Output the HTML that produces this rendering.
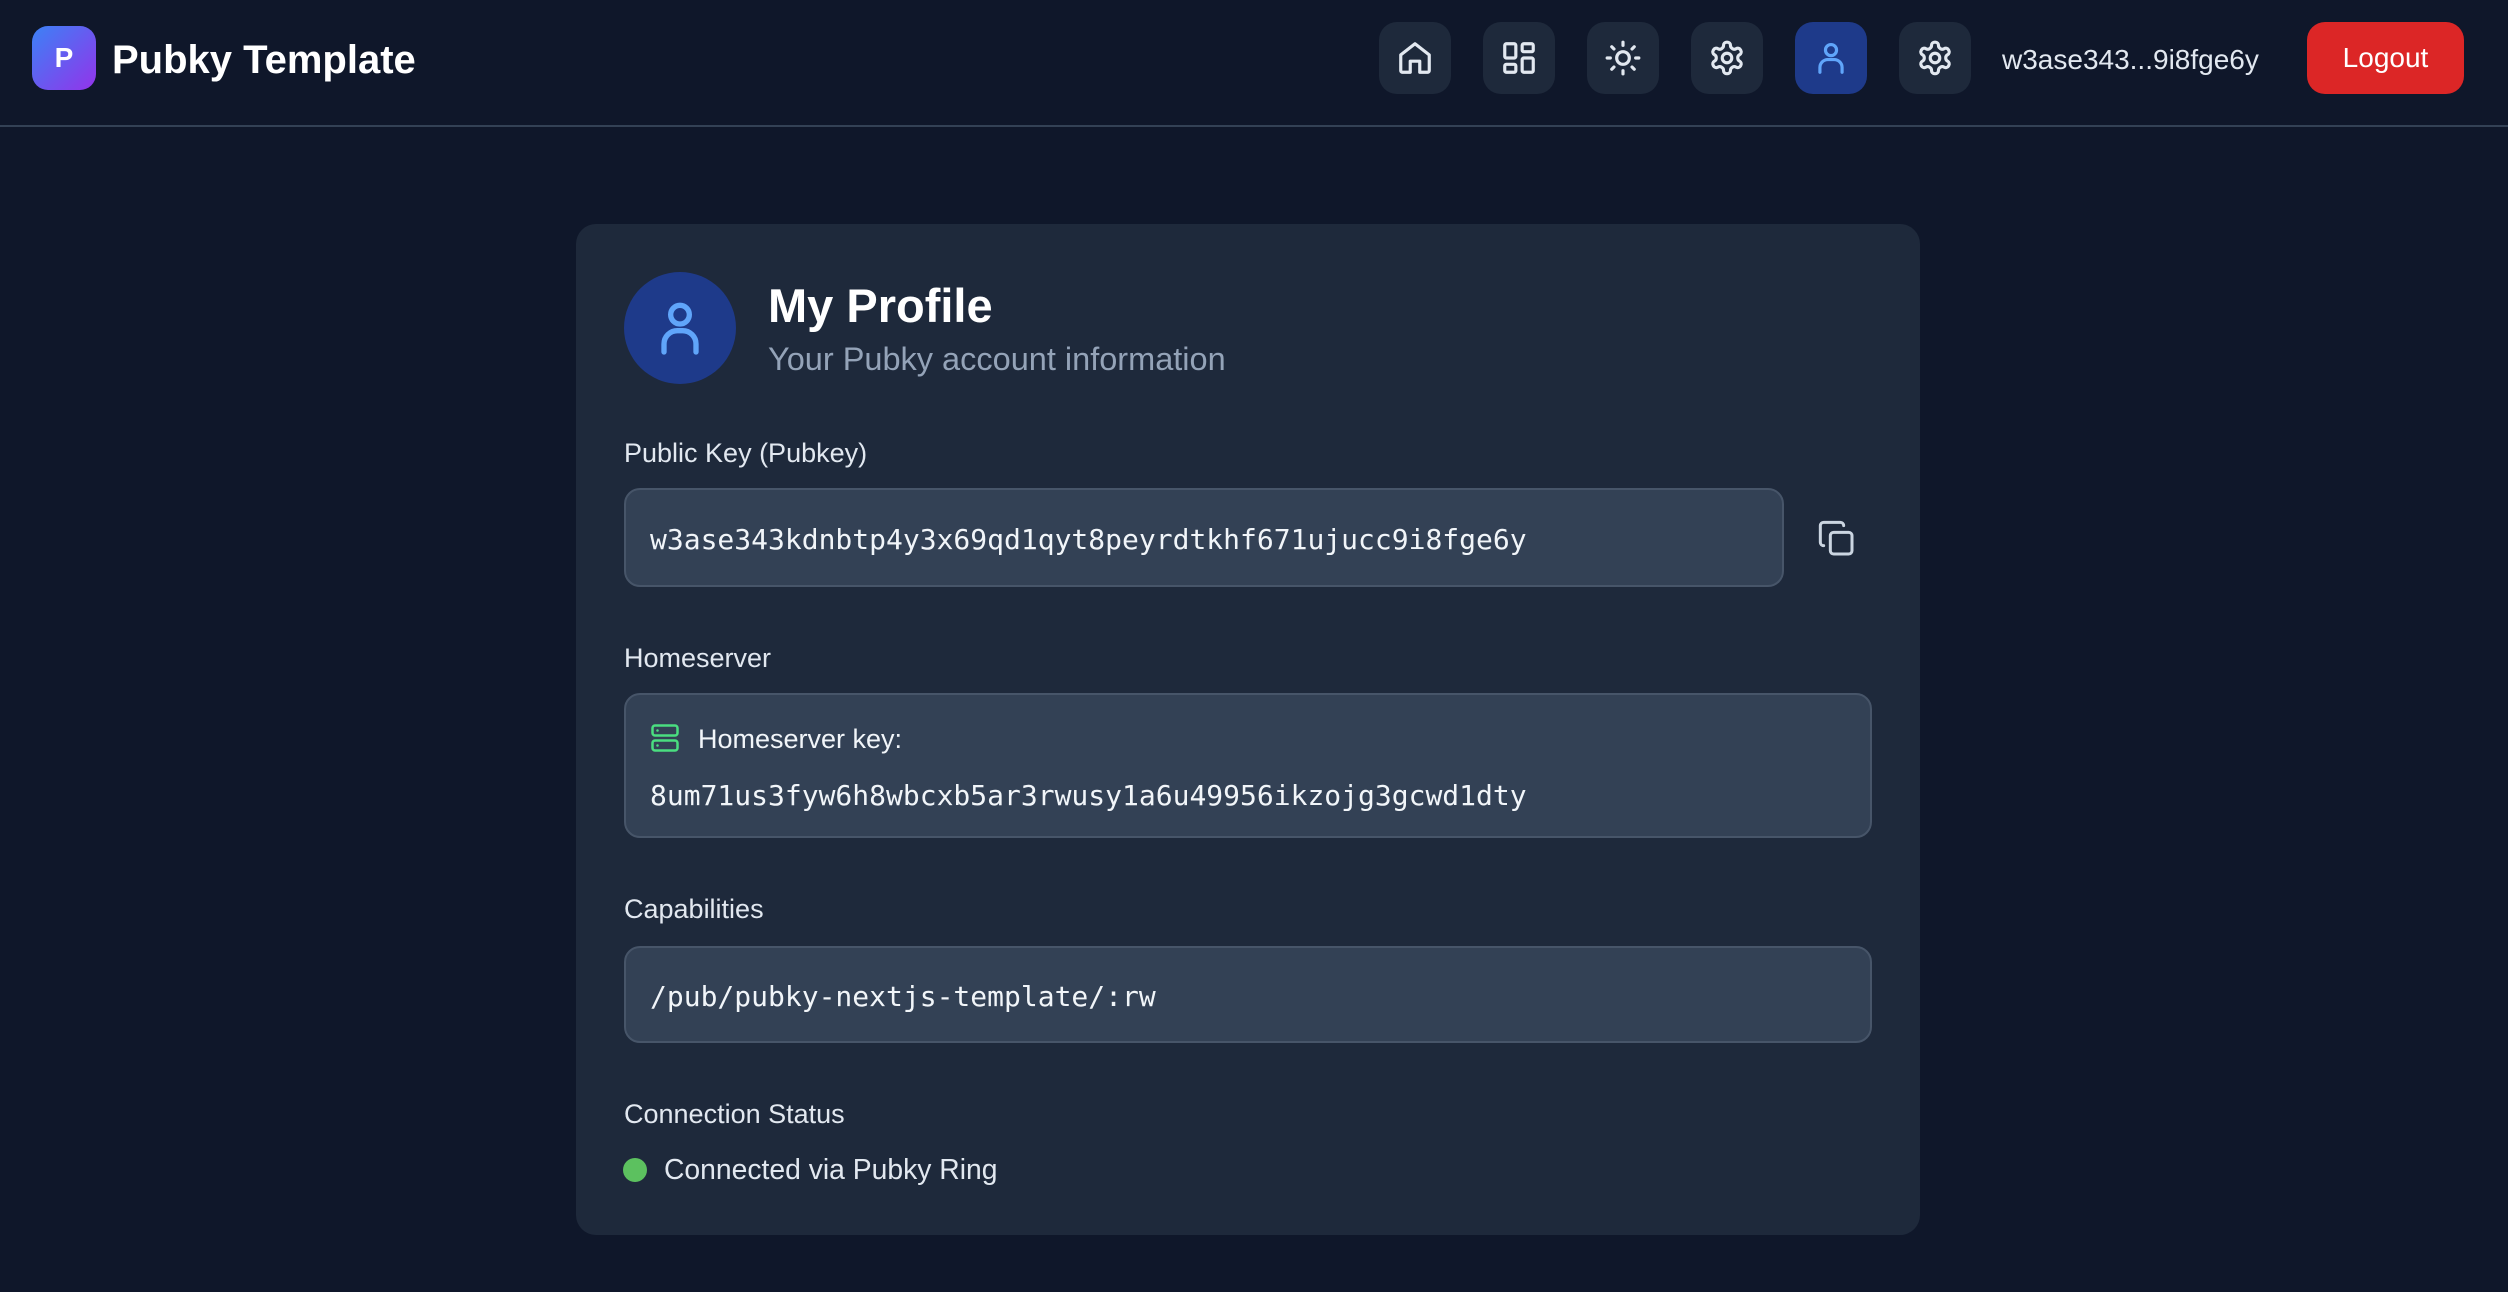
<!DOCTYPE html>
<html><head><meta charset="utf-8"><style>
*{box-sizing:border-box;margin:0;padding:0}
body{width:2508px;height:1292px;background:#0f172a;font-family:"Liberation Sans",sans-serif;color:#f8fafc;position:relative;overflow:hidden}
.hdr{position:absolute;left:0;top:0;width:2508px;height:127px;border-bottom:2px solid #334155}
.logo{position:absolute;left:32px;top:26px;width:64px;height:64px;border-radius:16px;background:linear-gradient(135deg,#3b82f6,#9333ea);color:#fff;font-weight:bold;font-size:28px;display:flex;align-items:center;justify-content:center}
.brand{position:absolute;left:112px;top:38px;font-size:40px;font-weight:bold;color:#fff}
.nb{position:absolute;top:22px;width:72px;height:72px;border-radius:18px;background:#1e293b;display:flex;align-items:center;justify-content:center}
.nb svg{width:38px;height:38px;fill:none;stroke:#e2e8f0;stroke-width:2;stroke-linecap:round;stroke-linejoin:round}
.user{position:absolute;left:2002px;top:44px;font-size:28px;color:#e2e8f0}
.logout{position:absolute;left:2307px;top:22px;width:157px;height:72px;border-radius:18px;background:#dc2626;color:#fff;font-size:28px;display:flex;align-items:center;justify-content:center}
.card{position:absolute;left:576px;top:224px;width:1344px;height:1011px;background:#1e293b;border-radius:20px}
.abs{position:absolute}
.av{left:624px;top:272px;width:112px;height:112px;border-radius:50%;background:#1e3a8a;display:flex;align-items:center;justify-content:center}
.lbl{position:absolute;left:624px;font-size:27px;color:#e2e8f0}
.box{position:absolute;left:624px;background:#334155;border:2px solid #475569;border-radius:16px}
.mono{font-family:"DejaVu Sans Mono","Liberation Mono",monospace;font-size:28px;color:#f1f5f9;position:absolute;left:650px}
</style></head><body>
<div class="hdr"></div>
<div class="logo">P</div>
<div class="brand">Pubky Template</div>
<div class="nb" style="left:1379px"><svg viewBox="0 0 24 24"><path d="M3 10l9-7 9 7v10a1 1 0 0 1-1 1h-5v-7H9v7H4a1 1 0 0 1-1-1z"/></svg></div>
<div class="nb" style="left:1483px"><svg viewBox="0 0 24 24"><rect x="3" y="3" width="7" height="9" rx="1"/><rect x="14" y="3" width="7" height="5" rx="1"/><rect x="14" y="12" width="7" height="9" rx="1"/><rect x="3" y="16" width="7" height="5" rx="1"/></svg></div>
<div class="nb" style="left:1587px"><svg viewBox="0 0 24 24"><circle cx="12" cy="12" r="4"/><path d="M12 2v2M12 20v2M4.9 4.9l1.4 1.4M17.7 17.7l1.4 1.4M2 12h2M20 12h2M6.3 17.7l-1.4 1.4M19.1 4.9l-1.4 1.4"/></svg></div>
<div class="nb" style="left:1691px"><svg viewBox="0 0 24 24"><path d="M12.2 2h-.4a2 2 0 0 0-2 2v.2a2 2 0 0 1-1 1.7l-.4.3a2 2 0 0 1-2 0l-.2-.1a2 2 0 0 0-2.7.7l-.2.4a2 2 0 0 0 .7 2.7l.2.1a2 2 0 0 1 1 1.7v.5a2 2 0 0 1-1 1.7l-.2.1a2 2 0 0 0-.7 2.7l.2.4a2 2 0 0 0 2.7.7l.2-.1a2 2 0 0 1 2 0l.4.3a2 2 0 0 1 1 1.7v.2a2 2 0 0 0 2 2h.4a2 2 0 0 0 2-2v-.2a2 2 0 0 1 1-1.7l.4-.3a2 2 0 0 1 2 0l.2.1a2 2 0 0 0 2.7-.7l.2-.4a2 2 0 0 0-.7-2.7l-.2-.1a2 2 0 0 1-1-1.7v-.5a2 2 0 0 1 1-1.7l.2-.1a2 2 0 0 0 .7-2.7l-.2-.4a2 2 0 0 0-2.7-.7l-.2.1a2 2 0 0 1-2 0l-.4-.3a2 2 0 0 1-1-1.7V4a2 2 0 0 0-2-2z"/><circle cx="12" cy="12" r="3"/></svg></div>
<div class="nb" style="left:1795px;background:#1e3a8a"><svg viewBox="0 0 24 24" style="stroke:#60a5fa"><circle cx="12" cy="7" r="3.5"/><path d="M5 21v-3a5 5 0 0 1 5-5h4a5 5 0 0 1 5 5v3"/></svg></div>
<div class="nb" style="left:1899px"><svg viewBox="0 0 24 24"><path d="M12.2 2h-.4a2 2 0 0 0-2 2v.2a2 2 0 0 1-1 1.7l-.4.3a2 2 0 0 1-2 0l-.2-.1a2 2 0 0 0-2.7.7l-.2.4a2 2 0 0 0 .7 2.7l.2.1a2 2 0 0 1 1 1.7v.5a2 2 0 0 1-1 1.7l-.2.1a2 2 0 0 0-.7 2.7l.2.4a2 2 0 0 0 2.7.7l.2-.1a2 2 0 0 1 2 0l.4.3a2 2 0 0 1 1 1.7v.2a2 2 0 0 0 2 2h.4a2 2 0 0 0 2-2v-.2a2 2 0 0 1 1-1.7l.4-.3a2 2 0 0 1 2 0l.2.1a2 2 0 0 0 2.7-.7l.2-.4a2 2 0 0 0-.7-2.7l-.2-.1a2 2 0 0 1-1-1.7v-.5a2 2 0 0 1 1-1.7l.2-.1a2 2 0 0 0 .7-2.7l-.2-.4a2 2 0 0 0-2.7-.7l-.2.1a2 2 0 0 1-2 0l-.4-.3a2 2 0 0 1-1-1.7V4a2 2 0 0 0-2-2z"/><circle cx="12" cy="12" r="3"/></svg></div>
<div class="user">w3ase343...9i8fge6y</div>
<div class="logout">Logout</div>

<div class="card"></div>
<div class="abs av"><svg viewBox="0 0 24 24" width="64" height="64" fill="none" stroke="#60a5fa" stroke-width="2" stroke-linecap="round"><circle cx="12" cy="7" r="3.5"/><path d="M6 21v-3a5 5 0 0 1 5-5h2a5 5 0 0 1 5 5v3"/></svg></div>
<div class="abs" style="left:768px;top:278px;font-size:47px;font-weight:bold;color:#fff">My Profile</div>
<div class="abs" style="left:768px;top:341px;font-size:32.5px;color:#94a3b8">Your Pubky account information</div>

<div class="lbl" style="top:438px">Public Key (Pubkey)</div>
<div class="box" style="top:488px;width:1160px;height:99px"></div>
<div class="mono" style="top:523px">w3ase343kdnbtp4y3x69qd1qyt8peyrdtkhf671ujucc9i8fge6y</div>
<svg class="abs" style="left:1817px;top:519px" width="40" height="40" viewBox="0 0 24 24" fill="none" stroke="#cbd5e1" stroke-width="1.8" stroke-linecap="round" stroke-linejoin="round"><rect x="8" y="8" width="13" height="13" rx="2"/><path d="M4 16c-1.1 0-2-.9-2-2V4c0-1.1.9-2 2-2h10c1.1 0 2 .9 2 2"/></svg>

<div class="lbl" style="top:643px">Homeserver</div>
<div class="box" style="top:693px;width:1248px;height:145px"></div>
<svg class="abs" style="left:650px;top:723px" width="30" height="30" viewBox="0 0 24 24" fill="none" stroke="#4ade80" stroke-width="2" stroke-linecap="round"><rect x="2" y="2" width="20" height="8" rx="2"/><rect x="2" y="14" width="20" height="8" rx="2"/><path d="M6 6h.01M6 18h.01"/></svg>
<div class="abs" style="left:698px;top:724px;font-size:27px;color:#f1f5f9">Homeserver key:</div>
<div class="mono" style="top:779px">8um71us3fyw6h8wbcxb5ar3rwusy1a6u49956ikzojg3gcwd1dty</div>

<div class="lbl" style="top:894px">Capabilities</div>
<div class="box" style="top:946px;width:1248px;height:97px"></div>
<div class="mono" style="top:980px">/pub/pubky-nextjs-template/:rw</div>

<div class="lbl" style="top:1099px">Connection Status</div>
<div class="abs" style="left:623px;top:1158px;width:24px;height:24px;border-radius:50%;background:#5cc15f"></div>
<div class="abs" style="left:664px;top:1153px;font-size:28.3px;color:#e2e8f0">Connected via Pubky Ring</div>
</body></html>
